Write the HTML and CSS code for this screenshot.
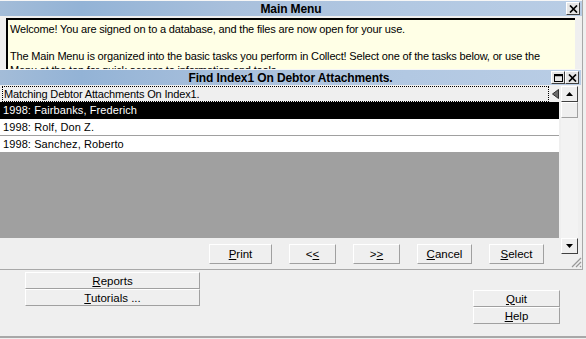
FILE: index.html
```html
<!DOCTYPE html>
<html lang="en">
<head>
    <meta charset="UTF-8">
    <title>Main Menu</title>
    <link rel="stylesheet" href="styles.css">
</head>
<body>
    <div class="app">
        <!-- Main menu window -->
        <div class="upper">
            <div class="titlebar main-title">
                <span class="title">Main Menu</span>
                <span class="tb-btns">
                    <span class="tb-btn">
                        <svg width="9" height="8" viewBox="0 0 9 8"><path d="M1 0.5 L8 7.5 M8 0.5 L1 7.5" stroke="#000" stroke-width="1.7"/></svg>
                    </span>
                </span>
            </div>

            <div class="welcome">
                <p>Welcome! You are signed on to a database, and the files are now open for your use.</p>
                <p>The Main Menu is organized into the basic tasks you perform in Collect! Select one of the tasks below, or use the Menu at the top for quick access to information and tools.</p>
            </div>

            <!-- Find window -->
            <div class="find">
                <div class="titlebar find-title">
                    <span class="title">Find Index1 On Debtor Attachments.</span>
                    <span class="tb-btns">
                        <span class="tb-btn">
                            <svg width="9" height="8" viewBox="0 0 9 8"><rect x="0.5" y="0.5" width="8" height="7" fill="none" stroke="#000"/><line x1="0" y1="1.5" x2="9" y2="1.5" stroke="#000" stroke-width="1.5"/></svg>
                        </span>
                        <span class="tb-btn">
                            <svg width="9" height="8" viewBox="0 0 9 8"><path d="M1 0.5 L8 7.5 M8 0.5 L1 7.5" stroke="#000" stroke-width="1.7"/></svg>
                        </span>
                    </span>
                </div>

                <div class="find-body">
                    <div class="find-left">
                        <div class="list">
                            <div class="list-head">
                                <span class="head-text">Matching Debtor Attachments On Index1.</span>
                                <span class="head-arrow">
                                    <svg width="7" height="10" viewBox="0 0 7 10"><polygon points="6.5,0.5 6.5,9.5 0.5,5" fill="#6a6a6a" stroke="#303030"/></svg>
                                </span>
                            </div>
                            <div class="row selected">1998: Fairbanks, Frederich</div>
                            <div class="row">1998: Rolf, Don Z.</div>
                            <div class="row">1998: Sanchez, Roberto</div>
                            <div class="list-empty"></div>
                        </div>
                        <div class="find-buttons">
                            <button class="btn btn-print"><u>P</u>rint</button>
                            <button class="btn btn-nav">&lt;<u>&lt;</u></button>
                            <button class="btn btn-nav">&gt;<u>&gt;</u></button>
                            <button class="btn btn-cancel"><u>C</u>ancel</button>
                            <button class="btn btn-select"><u>S</u>elect</button>
                        </div>
                    </div>

                    <div class="find-right">
                        <div class="scrollbar">
                            <div class="sb-btn">
                                <svg width="7" height="4" viewBox="0 0 7 4"><polygon points="3.5,0 7,4 0,4" fill="#000"/></svg>
                            </div>
                            <div class="sb-thumb"></div>
                            <div class="sb-track"></div>
                            <div class="sb-btn">
                                <svg width="7" height="4" viewBox="0 0 7 4"><polygon points="0,0 7,0 3.5,4" fill="#000"/></svg>
                            </div>
                        </div>
                        <div class="grip">
                            <svg width="13" height="13" viewBox="0 0 13 13"><path d="M12 3 L3 12 M12 7 L7 12 M12 11 L11 12" stroke="#999" stroke-width="1.2"/></svg>
                        </div>
                    </div>
                </div>
            </div>
        </div>

        <!-- Main menu buttons -->
        <div class="bottom">
            <div class="menu-col">
                <button class="btn menu-btn"><u>R</u>eports</button>
                <button class="btn menu-btn"><u>T</u>utorials ...</button>
            </div>
            <div class="side-col">
                <button class="btn side-btn"><u>Q</u>uit</button>
                <button class="btn side-btn"><u>H</u>elp</button>
            </div>
        </div>
    </div>
</body>
</html>
```

FILE: styles.css
```css
* {
    margin: 0;
    padding: 0;
    box-sizing: border-box;
}

body {
    background-color: #efefef;
    font-family: 'Liberation Sans', Arial, sans-serif;
    font-size: 11px;
    color: #000;
}

.app {
    width: 586px;
    height: 339px;
    overflow: hidden;
    display: flex;
    flex-direction: column;
    background-color: #efefef;
}

.upper {
    width: 583px;
    border-right: 1px solid #a8a8a8;
}

/* Title bars */
.titlebar {
    height: 16px;
    display: flex;
    align-items: center;
    justify-content: center;
    position: relative;
    border-top: 1px solid #f6f6f6;
    background: linear-gradient(to right, #a3bcd8 0%, #93b3d6 14%, #a9c0dc 40%, #b2c8e2 70%, #b9cde5 100%);
}

.title {
    font-weight: bold;
    font-size: 12px;
    letter-spacing: -0.1px;
}

.tb-btns {
    position: absolute;
    right: 2px;
    top: 1px;
    display: flex;
}

.tb-btn {
    width: 14px;
    height: 13px;
    display: flex;
    align-items: center;
    justify-content: center;
    background: #e6e6e6;
    border: 1px solid;
    border-color: #fff #404040 #404040 #fff;
}

/* Welcome text */
.welcome {
    margin: 2px 0 0 6px;
    width: 569px;
    height: 51px;
    overflow: hidden;
    background-color: #ffffe6;
    border-top: 2px solid #000;
    border-left: 2px solid #000;
    padding: 3px 30px 0 2px;
    line-height: 13.5px;
    letter-spacing: -0.17px;
}

.welcome p + p {
    margin-top: 13.5px;
}

/* Find window */
.find-title {
    margin-right: 1px;
}

.find-body {
    display: flex;
    padding-top: 1px;
    border-bottom: 1px solid #a8a8a8;
}

.find-left {
    width: 559px;
}

.list-head {
    height: 16px;
    display: flex;
    align-items: center;
}

.head-text {
    margin-left: 2px;
    width: 548px;
    height: 16px;
    border: 1px dotted #000;
    padding-left: 1px;
    line-height: 14px;
    letter-spacing: -0.15px;
}

.head-arrow {
    margin-left: 3px;
    display: flex;
}

.row {
    height: 17px;
    line-height: 16px;
    padding-left: 3px;
    background: #fff;
    border-bottom: 1px solid #a0a0a0;
    font-size: 11px;
    letter-spacing: 0.1px;
}

.row.selected {
    background: #000;
    color: #fff;
    border-bottom-color: #000;
}

.list-empty {
    height: 85px;
    background: #a0a0a0;
}

.find-buttons {
    height: 31px;
    display: flex;
    align-items: flex-start;
    padding: 6px 0 0 209px;
}

.btn {
    font-family: 'Liberation Sans', Arial, sans-serif;
    font-size: 11.5px;
    background: #efefef;
    border: 1px solid;
    border-color: #fff #a0a0a0 #a0a0a0 #fff;
    color: #000;
    height: 20px;
    line-height: 17px;
    text-align: center;
}

.btn-print { width: 63px; }
.btn-nav { width: 47px; margin-left: 17px; }
.btn-cancel { width: 55px; margin-left: 17px; }
.btn-select { width: 55px; margin-left: 17px; }

.find-right {
    width: 23px;
    padding-left: 2px;
    display: flex;
    flex-direction: column;
}

.scrollbar {
    width: 17px;
    height: 168px;
    display: flex;
    flex-direction: column;
    background: #f3f3f3;
}

.sb-btn,
.sb-thumb {
    height: 16px;
    display: flex;
    align-items: center;
    justify-content: center;
    background: #efefef;
    border: 1px solid;
    border-color: #fff #404040 #404040 #fff;
}

.sb-thumb {
    border-color: #fff #a0a0a0 #a0a0a0 #fff;
}

.sb-track {
    flex: 1;
}

.grip {
    margin: 0 0 0 8px;
    height: 14px;
    display: flex;
    align-items: flex-end;
}

/* Bottom buttons */
.bottom {
    flex: 1;
    display: flex;
    justify-content: space-between;
    padding: 2px 26px 0 25px;
    border-bottom: 2px solid #a8a8a8;
    margin-bottom: 1px;
}

.menu-col,
.side-col {
    display: flex;
    flex-direction: column;
}

.side-col {
    padding-top: 18px;
}

.menu-btn {
    width: 175px;
    height: 17px;
    line-height: 14px;
}

.side-btn {
    width: 87px;
    height: 17px;
    line-height: 14px;
}
```
